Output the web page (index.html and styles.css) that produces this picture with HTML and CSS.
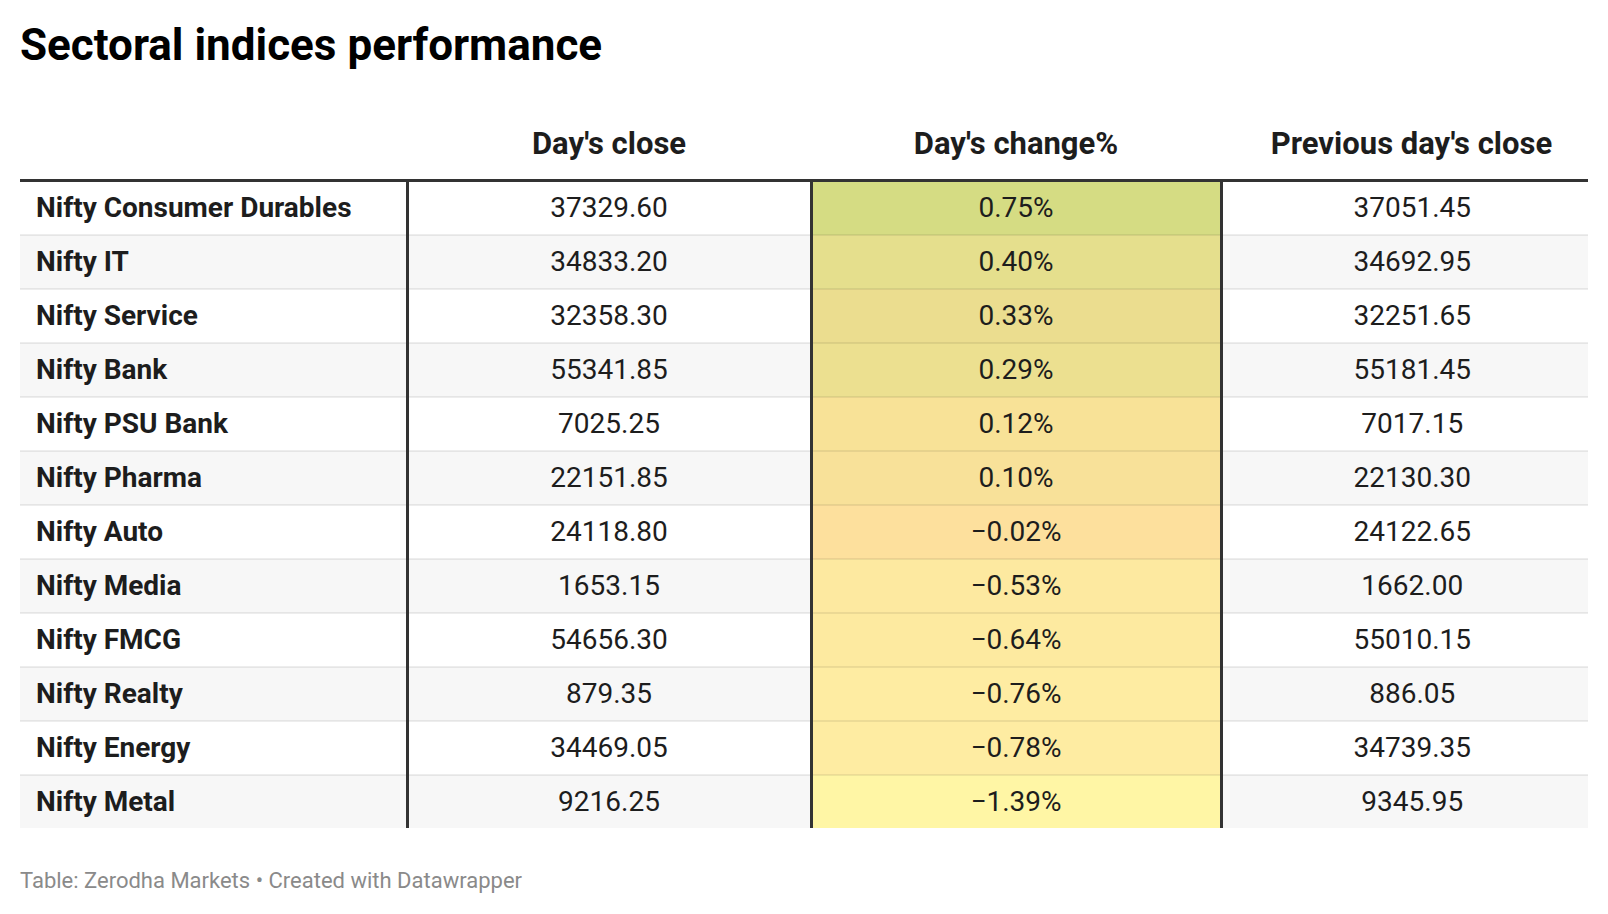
FILE: index.html
```html
<!DOCTYPE html>
<html>
<head>
<meta charset="utf-8">
<link rel="stylesheet" href="styles.css">
</head>
<body>
<div class="chart">
  <h1 class="title">Sectoral indices performance</h1>
  <table class="dw-table">
    <colgroup>
      <col class="c1"><col class="c2"><col class="c3"><col class="c4">
    </colgroup>
    <thead>
      <tr>
        <th class="name"></th>
        <th>Day's close</th>
        <th>Day's change%</th>
        <th class="last">Previous day's close</th>
      </tr>
    </thead>
    <tbody>
      <tr><td class="name">Nifty Consumer Durables</td><td>37329.60</td><td class="heat" style="background:#d5dc83">0.75%</td><td class="last">37051.45</td></tr>
      <tr><td class="name">Nifty IT</td><td>34833.20</td><td class="heat" style="background:#e5df8d">0.40%</td><td class="last">34692.95</td></tr>
      <tr><td class="name">Nifty Service</td><td>32358.30</td><td class="heat" style="background:#ebdd8f">0.33%</td><td class="last">32251.65</td></tr>
      <tr><td class="name">Nifty Bank</td><td>55341.85</td><td class="heat" style="background:#ece090">0.29%</td><td class="last">55181.45</td></tr>
      <tr><td class="name">Nifty PSU Bank</td><td>7025.25</td><td class="heat" style="background:#f8e297">0.12%</td><td class="last">7017.15</td></tr>
      <tr><td class="name">Nifty Pharma</td><td>22151.85</td><td class="heat" style="background:#f8e199">0.10%</td><td class="last">22130.30</td></tr>
      <tr><td class="name">Nifty Auto</td><td>24118.80</td><td class="heat" style="background:#fde09d">−0.02%</td><td class="last">24122.65</td></tr>
      <tr><td class="name">Nifty Media</td><td>1653.15</td><td class="heat" style="background:#fde9a0">−0.53%</td><td class="last">1662.00</td></tr>
      <tr><td class="name">Nifty FMCG</td><td>54656.30</td><td class="heat" style="background:#fdeaa0">−0.64%</td><td class="last">55010.15</td></tr>
      <tr><td class="name">Nifty Realty</td><td>879.35</td><td class="heat" style="background:#feeca2">−0.76%</td><td class="last">886.05</td></tr>
      <tr><td class="name">Nifty Energy</td><td>34469.05</td><td class="heat" style="background:#feeca2">−0.78%</td><td class="last">34739.35</td></tr>
      <tr><td class="name">Nifty Metal</td><td>9216.25</td><td class="heat" style="background:#fff6a5">−1.39%</td><td class="last">9345.95</td></tr>
    </tbody>
  </table>
  <div class="footer">Table: Zerodha Markets • Created with Datawrapper</div>
</div>
</body>
</html>
```

FILE: styles.css
```css
html, body {
  margin: 0;
  padding: 0;
  background: #ffffff;
}

body {
  font-family: Roboto, "Liberation Sans", sans-serif;
  color: #1d1d1d;
}

.chart {
  padding: 0 20px;
}

.title {
  margin: 0;
  padding-top: 19px;
  font-size: 44px;
  line-height: 52px;
  font-weight: 700;
  color: #000000;
}

.dw-table {
  width: 1568px;
  margin-top: 55px;
  border-collapse: collapse;
  table-layout: fixed;
}

.c1 { width: 387px; }
.c2 { width: 404px; }
.c3 { width: 410px; }
.c4 { width: 367px; }

.dw-table th {
  font-size: 31px;
  font-weight: 700;
  color: #1d1d1d;
  text-align: center;
  padding: 0 0 17px;
  line-height: 36px;
  border-bottom: 3px solid #333333;
}

.dw-table td {
  font-size: 28px;
  line-height: 32px;
  height: 52px;
  padding: 0;
  text-align: center;
  vertical-align: middle;
  border-bottom: 2px solid rgba(0, 0, 0, 0.07);
}

.dw-table th.last,
.dw-table td.last {
  padding-left: 14px;
}

.dw-table tbody tr:nth-child(even) td {
  background: #f7f7f7;
}

.dw-table tbody tr:last-child td {
  border-bottom: none;
}

.dw-table td + td {
  border-left: 3px solid #333333;
}

.dw-table td.name {
  text-align: left;
  padding-left: 16px;
  font-weight: 700;
}

.footer {
  margin-top: 40px;
  font-size: 22px;
  line-height: 26px;
  color: #8a8a8a;
}
```
